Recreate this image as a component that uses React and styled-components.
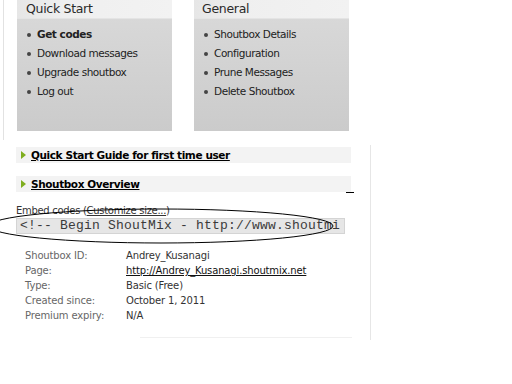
import React from "react";
import styled, { createGlobalStyle } from "styled-components";

const Global = createGlobalStyle`
  html, body { margin: 0; padding: 0; background: #fff; }
  body { font-family: Tahoma, "DejaVu Sans", "Liberation Sans", sans-serif; color: #333; }
`;

const Page = styled.div`
  width: 512px;
  height: 384px;
  position: relative;
  overflow: hidden;
`;

const Side = styled.div`
  position: absolute;
  left: 3px;
  top: 0;
  width: 1px;
  height: 140px;
  background: #e2e2e2;
`;

const Panels = styled.div`
  display: flex;
  gap: 22px;
  padding-left: 17px;
`;

const Panel = styled.div`
  width: 155px;
  height: 131px;
  display: flex;
  flex-direction: column;
  background: linear-gradient(#dadada, #cbcbcb);
`;

const PanelHead = styled.div`
  height: 18px;
  background: linear-gradient(90deg, #e6e6e6, #efefef 30%, #f2f2f2);
  border-bottom: 1px solid #e4e4e4;
  font-family: "DejaVu Sans", sans-serif;
  font-size: 12.5px;
  letter-spacing: -0.3px;
  color: #2a2a2a;
  line-height: 18px;
  padding-left: ${(p) => p.$pad}px;
`;

const List = styled.ul`
  margin: 0;
  padding: 6px 0 0 ${(p) => p.$pad}px;
  list-style: none;
`;

const Item = styled.li`
  font-family: "DejaVu Sans", sans-serif;
  font-size: 10.5px;
  letter-spacing: -0.45px;
  line-height: 19px;
  height: 19px;
  color: #222;
  font-weight: ${(p) => (p.$bold ? 700 : 400)};
  display: flex;
  align-items: center;
  &::before {
    content: "";
    width: 4px;
    height: 4px;
    border-radius: 50%;
    background: #444;
    margin-right: 6px;
  }
`;

const Main = styled.div`
  position: relative;
  margin-top: 14px;
  padding: 2px 0 0 16px;
  width: 354px;
  height: 193px;
  border-right: 1px solid #e6e6e6;
`;

const Bar = styled.div`
  width: 335px;
  height: 16px;
  margin-bottom: 13px;
  background: #f3f3f3;
  display: flex;
  align-items: center;
  gap: 5px;
  padding-left: 5px;
  box-sizing: border-box;
`;

const Arrow = styled.span`
  width: 0;
  height: 0;
  border-top: 4px solid transparent;
  border-bottom: 4px solid transparent;
  border-left: 5px solid #7fae1f;
`;

const BarLink = styled.a`
  font-family: "DejaVu Sans", sans-serif;
  font-size: 10.5px;
  font-weight: 700;
  letter-spacing: -0.4px;
  color: #000;
  text-decoration: underline;
`;

const Dash = styled.div`
  position: absolute;
  left: 346px;
  top: 47px;
  width: 8px;
  height: 1px;
  background: #000;
`;

const EmbedLabel = styled.div`
  font-family: "DejaVu Sans", sans-serif;
  font-size: 10px;
  letter-spacing: -0.3px;
  color: #333;
  margin-top: 9px;
  line-height: 12px;
  & u { text-decoration: underline; }
`;

const CodeBox = styled.div`
  width: 329px;
  height: 16px;
  margin-top: 1px;
  box-sizing: border-box;
  background: #e6e6e6;
  border: 1px solid #d4d4d4;
  font-family: "Liberation Mono", monospace;
  font-size: 13px;
  letter-spacing: 0.2px;
  line-height: 14px;
  color: #3a3a3a;
  padding-left: 3px;
  white-space: nowrap;
  overflow: hidden;
`;

const Ellipse = styled.svg`
  position: absolute;
  left: -14px;
  top: 62px;
`;

const Details = styled.div`
  display: grid;
  grid-template-columns: 101px auto;
  margin: 14px 0 0 9px;
  font-family: "DejaVu Sans", sans-serif;
  font-size: 10px;
  letter-spacing: -0.15px;
  line-height: 15px;
`;

const Label = styled.div`
  color: #666;
`;

const Value = styled.div`
  color: #333;
  & a { color: #111; text-decoration: underline; }
`;

const Foot = styled.div`
  position: absolute;
  left: 140px;
  top: 337px;
  width: 212px;
  height: 1px;
  background: #f0f0f0;
`;

export default function App() {
  return (
    <Page>
      <Global />
      <Side />
      <Panels>
        <Panel>
          <PanelHead $pad={9}>Quick Start</PanelHead>
          <List $pad={10}>
            <Item $bold>Get codes</Item>
            <Item>Download messages</Item>
            <Item>Upgrade shoutbox</Item>
            <Item>Log out</Item>
          </List>
        </Panel>
        <Panel>
          <PanelHead $pad={8}>General</PanelHead>
          <List $pad={10}>
            <Item>Shoutbox Details</Item>
            <Item>Configuration</Item>
            <Item>Prune Messages</Item>
            <Item>Delete Shoutbox</Item>
          </List>
        </Panel>
      </Panels>
      <Main>
        <Bar>
          <Arrow />
          <BarLink>Quick Start Guide for first time user</BarLink>
        </Bar>
        <Bar>
          <Arrow />
          <BarLink>Shoutbox Overview</BarLink>
        </Bar>
        <Dash />
        <EmbedLabel>
          Embed codes (<u>Customize size...</u>)
        </EmbedLabel>
        <CodeBox>&lt;!-- Begin ShoutMix - http://www.shoutmi</CodeBox>
        <Ellipse width="352" height="40" viewBox="0 0 352 40">
          <ellipse cx="175" cy="19" rx="172" ry="17" fill="none" stroke="#000" strokeWidth="1" />
        </Ellipse>
        <Details>
          <Label>Shoutbox ID:</Label>
          <Value>Andrey_Kusanagi</Value>
          <Label>Page:</Label>
          <Value><a>http://Andrey_Kusanagi.shoutmix.net</a></Value>
          <Label>Type:</Label>
          <Value>Basic (Free)</Value>
          <Label>Created since:</Label>
          <Value>October 1, 2011</Value>
          <Label>Premium expiry:</Label>
          <Value>N/A</Value>
        </Details>
      </Main>
      <Foot />
    </Page>
  );
}
